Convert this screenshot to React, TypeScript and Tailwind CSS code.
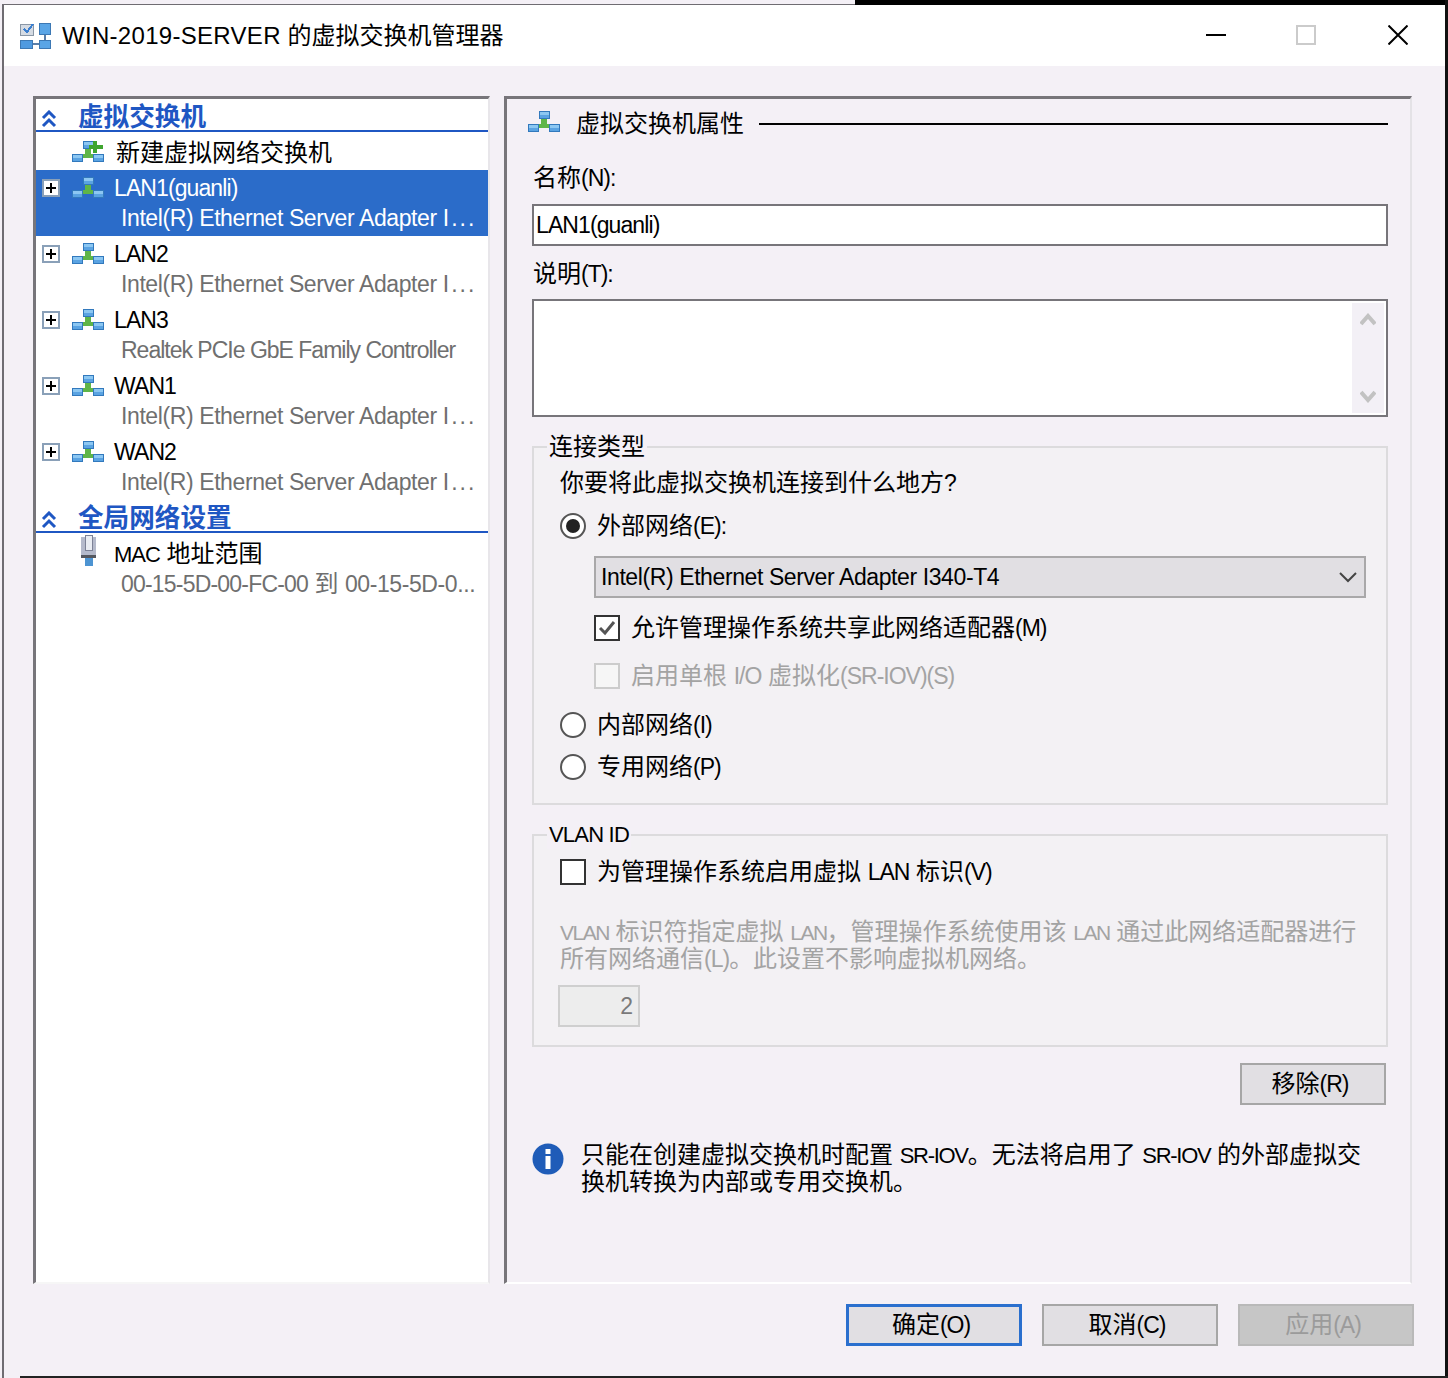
import React from "react";

const FONT = '"Liberation Sans","Noto Sans CJK SC",sans-serif';

function L({ children, s = 23 }: { children: React.ReactNode; s?: 21 | 22 | 23 }) {
  return (
    <span className={s === 21 ? "text-[21px] tracking-[-1.5px]" : s === 22 ? "text-[22px] tracking-[-1.3px]" : "text-[23px] tracking-[-1px]"}>
      {children}
    </span>
  );
}

function Block({ x, y }: { x: number; y: number }) {
  return (
    <g>
      <rect x={x} y={y} width="11" height="8" fill="#3279bd" />
      <rect x={x + 1} y={y + 1} width="9" height="3" fill="#8cc7f2" />
      <rect x={x + 1} y={y + 4} width="9" height="3" fill="#5aa3e2" />
    </g>
  );
}

function Net({ add = false, className = "" }: { add?: boolean; className?: string }) {
  return (
    <svg width="32" height="22" viewBox="0 0 32 22" shapeRendering="crispEdges" className={"shrink-0 " + className}>
      <path d="M13 8h6v5h4v2h2v2H7v-2h2v-2h4z" fill="#5fb548" />
      <Block x={11} y={0} />
      <Block x={0} y={13} />
      <Block x={21} y={13} />
      {add && <path d="M21 0h4v4h6v4h-6v4h-4V8h-4V4h4z" fill="#3fa52f" />}
    </svg>
  );
}

function Plus() {
  return (
    <div className="w-[18px] h-[18px] border-2 border-[#8aa0b8] bg-white flex items-center justify-center shrink-0">
      <svg width="12" height="12" viewBox="0 0 12 12" shapeRendering="crispEdges">
        <path d="M5 1h2v4h4v2H7v4H5V7H1V5h4z" fill="#000" />
      </svg>
    </div>
  );
}

function Collapse() {
  return (
    <svg width="16" height="18" viewBox="0 0 16 18" className="shrink-0">
      <path d="M2 8l6-6 6 6M2 16l6-6 6 6" fill="none" stroke="#1f57c3" strokeWidth="3" />
    </svg>
  );
}

function Heading({ text }: { text: string }) {
  return (
    <div className="h-[33px] flex items-end border-b-2 border-[#1f57c3] pl-[5px]">
      <div className="mb-[2px]"><Collapse /></div>
      <span className="ml-[21px] text-[25.6px] leading-[30px] -mb-[2px] font-bold text-[#1f57c3] whitespace-nowrap">{text}</span>
    </div>
  );
}

function SwitchRow({ name, sub, selected = false }: { name: string; sub: React.ReactNode; selected?: boolean }) {
  return (
    <div className={"h-[66px] pl-[6px] pt-[6px] " + (selected ? "bg-[#2b6cc9] text-white" : "")}>
      <div className="flex items-center h-[24px]">
        <Plus />
        <Net className="ml-[12px]" />
        <span className="ml-[10px] text-[23px] tracking-[-0.9px] leading-[24px] whitespace-nowrap">{name}</span>
      </div>
      <div className={"ml-[79px] mt-[6px] text-[23px] leading-[24px] whitespace-nowrap " + (selected ? "" : "text-[#6f6f6f]")}>{sub}</div>
    </div>
  );
}

const adapter = (
  <span className="tracking-[-0.4px]">
    Intel(R) Ethernet Server Adapter <span className="tracking-[2px]">I...</span>
  </span>
);

function Radio({ on = false, label }: { on?: boolean; label: React.ReactNode }) {
  return (
    <div className="flex items-center h-[28px]">
      <div className="w-[26px] h-[26px] rounded-full border-[2px] border-[#555] bg-white flex items-center justify-center shrink-0">
        {on && <div className="w-[14px] h-[14px] rounded-full bg-[#222]" />}
      </div>
      <span className="ml-[11px] text-[24px] leading-[28px] whitespace-nowrap">{label}</span>
    </div>
  );
}

function Btn({ label, kind = "normal" }: { label: React.ReactNode; kind?: "normal" | "primary" | "off" }) {
  const c =
    kind === "primary"
      ? "border-[3px] border-[#2a6fce] bg-[#e1dfe3] text-black"
      : kind === "off"
      ? "border-2 border-[#b9b9b9] bg-[#c6c6c6] text-[#9b9b9b]"
      : "border-2 border-[#a6a6a6] bg-[#e1dfe3] text-black";
  return (
    <div className={"w-[176px] h-[42px] flex items-center justify-center pr-[6px] text-[24px] " + c}>{label}</div>
  );
}

export default function App() {
  return (
    <div
      className="relative w-[1448px] h-[1378px] overflow-hidden bg-[#f4f0f6] text-black"
      style={{ fontFamily: FONT }}
    >
      <div className="absolute left-[855px] right-0 top-0 h-[5px] bg-black" />
      <div className="absolute right-0 top-0 bottom-0 w-[3px] bg-[#111]" />
      <div className="absolute left-[20px] right-0 bottom-0 h-[2px] bg-[#222]" />
      <div className="absolute left-[2px] top-[4px] bottom-0 w-[2px] bg-[#6f6c72]" />
      <div className="absolute left-[2px] top-[4px] w-[853px] h-[2px] bg-[#6f6c72]" />

      <div className="relative ml-[4px] mr-[3px] pt-[5px] flex flex-col h-[1376px]">
        {/* title bar */}
        <div className="h-[61px] bg-white flex items-center pl-[16px] shrink-0">
          <svg width="32" height="28" viewBox="0 0 32 28" shapeRendering="crispEdges" className="shrink-0">
            <rect x="0.5" y="2.5" width="13" height="11" fill="#d5dbe3" stroke="#8a97a6" />
            <path d="M4 7l3 3 6-8" fill="none" stroke="#3b7fd0" strokeWidth="2" />
            <rect x="19.5" y="1.5" width="11" height="11" fill="#5aa5e6" stroke="#3c78b4" />
            <rect x="0.5" y="18.5" width="12" height="8" fill="#4f9ae0" stroke="#3c78b4" />
            <rect x="19.5" y="18.5" width="11" height="8" fill="#5aa5e6" stroke="#3c78b4" />
            <path d="M25 13v5M13 22h6" stroke="#5a7ea8" strokeWidth="2" />
          </svg>
          <span className="ml-[10px] text-[24px] whitespace-nowrap">
            <span className="tracking-[0.3px]">WIN-2019-SERVER</span> 的虚拟交换机管理器
          </span>
          <div className="ml-auto flex items-center -mt-[2px]">
            <svg width="20" height="20" viewBox="0 0 20 20" shapeRendering="crispEdges" className="mr-[70px]"><rect x="0" y="9" width="20" height="2" fill="#000" /></svg>
            <div className="w-[20px] h-[20px] border-2 border-[#cbcbcb] mr-[72px]" />
            <svg width="20" height="20" viewBox="0 0 20 20" className="mr-[37px]"><path d="M0.5 0.5l19 19M19.5 0.5l-19 19" stroke="#000" strokeWidth="2" /></svg>
          </div>
        </div>

        {/* panes */}
        <div className="flex mt-[30px] ml-[29px] gap-[14px]">
          <div className="w-[457px] h-[1188px] bg-white border-t-[3px] border-l-[3px] border-[#77757a] border-r-2 border-r-[#e8e6ea] border-b-2 border-b-[#f6f6f6] shrink-0">
            <Heading text="虚拟交换机" />
            <div className="h-[38px] flex items-center pt-[1px]">
              <Net add className="ml-[36px]" />
              <span className="ml-[12px] text-[24px] relative top-[1px] whitespace-nowrap">新建虚拟网络交换机</span>
            </div>
            <SwitchRow selected name="LAN1(guanli)" sub={adapter} />
            <SwitchRow name="LAN2" sub={adapter} />
            <SwitchRow name="LAN3" sub={<span className="tracking-[-1px]">Realtek PCIe GbE Family Controller</span>} />
            <SwitchRow name="WAN1" sub={adapter} />
            <SwitchRow name="WAN2" sub={adapter} />
            <Heading text="全局网络设置" />
            <div className="h-[66px] pt-[9px]">
              <div className="flex items-center h-[24px] pl-[44px]">
                <svg width="18" height="32" viewBox="0 0 18 32" shapeRendering="crispEdges" className="shrink-0 -mt-[6px]">
                  <rect x="1" y="2" width="15" height="19" fill="#b5bacb" />
                  <rect x="5.5" y="0.5" width="7" height="15" fill="#e9ecf2" stroke="#7d8296" />
                  <rect x="1" y="20" width="15" height="3" fill="#55585f" />
                  <rect x="5" y="23" width="8" height="8" fill="#4d94d2" />
                </svg>
                <span className="ml-[16px] text-[24px] whitespace-nowrap"><span className="text-[22px] tracking-[-1px]">MAC</span> 地址范围</span>
              </div>
              <div className="ml-[85px] mt-[6px] text-[23px] leading-[24px] text-[#6f6f6f] whitespace-nowrap">
                <span className="tracking-[-0.8px]">00-15-5D-00-FC-00</span> <span className="text-[24px]">到</span> <span className="tracking-[-0.4px]">00-15-5D-0...</span>
              </div>
            </div>
          </div>

          <div className="w-[908px] h-[1188px] border-t-[3px] border-l-[3px] border-[#77757a] border-r-2 border-r-[#e4e2e6] border-b-2 border-b-white pl-[25px] pr-[22px] pt-[11px] shrink-0">
            <div className="flex items-center h-[28px]">
              <Net className="-ml-[4px] -mt-[5px]" />
              <span className="ml-[16px] text-[24px] whitespace-nowrap">虚拟交换机属性</span>
              <div className="flex-1 h-[2px] bg-black ml-[15px]" />
            </div>
            <div className="mt-[26px] text-[24px] leading-[28px] ml-[1px]">名称<L>(N):</L></div>
            <div className="mt-[12px] h-[42px] bg-white border-2 border-[#77757a] flex items-center pl-[2px] text-[23px] tracking-[-0.9px]">LAN1(guanli)</div>
            <div className="mt-[14px] text-[24px] leading-[28px] ml-[1px]">说明<L>(T):</L></div>
            <div className="mt-[11px] h-[118px] bg-white border-2 border-[#77757a] flex justify-end p-[2px]">
              <div className="w-[32px] h-full bg-[#f3f0f6] flex flex-col items-center justify-between py-[10px]">
                <svg width="16" height="14" viewBox="0 0 16 14"><path d="M1 11l7-8 7 8" fill="none" stroke="#c2c2c2" strokeWidth="4" /></svg>
                <svg width="16" height="14" viewBox="0 0 16 14"><path d="M1 3l7 8 7-8" fill="none" stroke="#c2c2c2" strokeWidth="4" /></svg>
              </div>
            </div>

            <fieldset className="mt-[16px] h-[372px] min-w-0 border-2 border-[#dcdbdd] bg-[#f3f1f4] pl-[26px] pr-[20px]">
              <legend className="-ml-[13px] px-[2px] text-[24px] leading-[28px] bg-[#f4f0f6]">连接类型</legend>
              <div className="text-[24px] leading-[28px] whitespace-nowrap mt-[8px]">你要将此虚拟交换机连接到什么地方<L>?</L></div>
              <div className="mt-[15px]"><Radio on label={<>外部网络<L>(E):</L></>} /></div>
              <div className="ml-[34px] mt-[16px] h-[42px] border-2 border-[#a9a8a9] bg-[#e1dfe3] flex items-center pl-[5px] pr-[6px] text-[23px]">
                <span className="tracking-[-0.4px] whitespace-nowrap">Intel(R) Ethernet Server Adapter I340-T4</span>
                <svg width="20" height="12" viewBox="0 0 20 12" className="ml-auto"><path d="M2 2l8 8 8-8" fill="none" stroke="#444" strokeWidth="2" /></svg>
              </div>
              <div className="ml-[34px] mt-[16px] flex items-center h-[28px]">
                <div className="w-[26px] h-[26px] border-2 border-[#333] bg-white flex items-center justify-center">
                  <svg width="18" height="16" viewBox="0 0 18 16"><path d="M2 8l5 5 9-11" fill="none" stroke="#555" strokeWidth="3" /></svg>
                </div>
                <span className="ml-[11px] text-[24px] whitespace-nowrap">允许管理操作系统共享此网络适配器<L>(M)</L></span>
              </div>
              <div className="ml-[34px] mt-[20px] flex items-center h-[28px] text-[#a3a3a3]">
                <div className="w-[26px] h-[26px] border-2 border-[#cccccc] bg-[#f6f6f6]" />
                <span className="ml-[11px] text-[24px] whitespace-nowrap">启用单根 <L>I/O</L> 虚拟化<L>(SR-IOV)(S)</L></span>
              </div>
              <div className="mt-[21px]"><Radio label={<>内部网络<L>(I)</L></>} /></div>
              <div className="mt-[14px]"><Radio label={<>专用网络<L>(P)</L></>} /></div>
            </fieldset>

            <fieldset className="mt-[16px] h-[226px] min-w-0 border-2 border-[#dcdbdd] bg-[#f3f1f4] pl-[26px] pr-[20px]">
              <legend className="-ml-[13px] px-[2px] text-[22px] tracking-[-0.8px] leading-[28px] bg-[#f4f0f6]">VLAN ID</legend>
              <div className="flex items-center h-[28px] mt-[9px]">
                <div className="w-[26px] h-[26px] border-2 border-[#333] bg-white" />
                <span className="ml-[11px] text-[24px] whitespace-nowrap">为管理操作系统启用虚拟 <L>LAN</L> 标识<L>(V)</L></span>
              </div>
              <div className="mt-[33px] text-[24px] leading-[26px] text-[#a3a3a3] whitespace-nowrap">
                <div><L s={21}>VLAN</L> 标识符指定虚拟 <L s={21}>LAN</L>，管理操作系统使用该 <L s={21}>LAN</L> 通过此网络适配器进行</div>
                <div>所有网络通信<L>(L)</L>。此设置不影响虚拟机网络。</div>
              </div>
              <div className="mt-[13px] -ml-[2px] w-[82px] h-[42px] border-2 border-[#cfcfcf] bg-[#ededed] flex items-center justify-end pr-[5px] text-[23px] text-[#7a7a7a]">2</div>
            </fieldset>

            <div className="flex justify-end mt-[16px] mr-[2px]">
              <div className="w-[146px] h-[42px] border-2 border-[#a6a6a6] bg-[#e1dfe3] flex items-center justify-center pr-[6px] text-[24px]">移除<L>(R)</L></div>
            </div>

            <div className="flex mt-[37px]">
              <svg width="32" height="32" viewBox="0 0 32 32" className="shrink-0 mt-[1px]">
                <circle cx="16" cy="16" r="15.5" fill="#1f5cb8" />
                <rect x="13.5" y="13" width="5" height="13" fill="#fff" />
                <rect x="13.5" y="6" width="5" height="5" fill="#fff" />
              </svg>
              <div className="ml-[17px] text-[24px] leading-[26px] whitespace-nowrap">
                <div>只能在创建虚拟交换机时配置 <L s={22}>SR-IOV</L>。无法将启用了 <L s={22}>SR-IOV</L> 的外部虚拟交</div>
                <div>换机转换为内部或专用交换机。</div>
              </div>
            </div>
          </div>
        </div>

        {/* footer */}
        <div className="flex justify-end gap-[20px] mt-[20px] mr-[31px]">
          <Btn kind="primary" label={<>确定<L>(O)</L></>} />
          <Btn label={<>取消<L>(C)</L></>} />
          <Btn kind="off" label={<>应用<L>(A)</L></>} />
        </div>
      </div>
    </div>
  );
}
